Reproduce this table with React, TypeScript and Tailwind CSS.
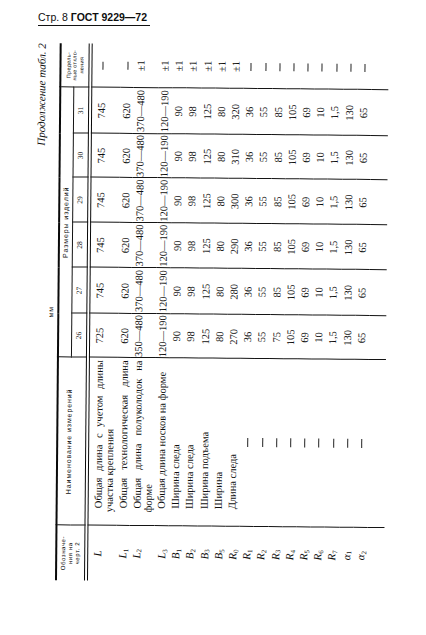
const SIZES = ["26", "27", "28", "29", "30", "31"];

type Row = {
  sym: string;
  sub: string;
  name: string | null;
  vals: string[];
  dev: string;
  tr?: string;
  td?: string;
  last?: boolean;
};

const all = (v: string) => [v, v, v, v, v, v];

const ROWS: Row[] = [
  { sym: "L", sub: "", name: "Общая длина с учетом длины участка крепления", vals: ["725", "745", "745", "745", "745", "745"], dev: "—", tr: "h-[30px]", td: "pt-[4px] leading-[11px]" },
  { sym: "L", sub: "1", name: "Общая технологическая длина", vals: all("620"), dev: "—", tr: "h-[13px]", td: "leading-[13px]", last: true },
  { sym: "L", sub: "2", name: "Общая длина полуколодок на форме", vals: ["350—480", "370—480", "370—480", "370—480", "370—480", "370—480"], dev: "±1", tr: "h-[25px]", td: "pt-[1.5px] leading-[11px]" },
  { sym: "L", sub: "3", name: "Общая длина носков на форме", vals: all("120—190"), dev: "±1" },
  { sym: "B", sub: "1", name: "Ширина следа", vals: all("90"), dev: "±1" },
  { sym: "B", sub: "2", name: "Ширина следа", vals: all("98"), dev: "±1" },
  { sym: "B", sub: "3", name: "Ширина подъема", vals: all("125"), dev: "±1" },
  { sym: "B", sub: "5", name: "Ширина", vals: all("80"), dev: "±1" },
  { sym: "R", sub: "0", name: "Длина следа", vals: ["270", "280", "290", "300", "310", "320"], dev: "±1" },
  { sym: "R", sub: "1", name: null, vals: all("36"), dev: "—" },
  { sym: "R", sub: "2", name: null, vals: all("55"), dev: "—" },
  { sym: "R", sub: "3", name: null, vals: ["75", "85", "85", "85", "85", "85"], dev: "—" },
  { sym: "R", sub: "4", name: null, vals: all("105"), dev: "—" },
  { sym: "R", sub: "5", name: null, vals: all("69"), dev: "—" },
  { sym: "R", sub: "6", name: null, vals: all("10"), dev: "—" },
  { sym: "R", sub: "7", name: null, vals: all("1,5"), dev: "—" },
  { sym: "α", sub: "1", name: null, vals: all("130"), dev: "—" },
  { sym: "α", sub: "2", name: null, vals: all("65"), dev: "—" },
];

const line = "border-[#141414]";

const Dash = ({ w }: { w: string }) => <span className={`inline-block ${w} h-px bg-[#222] align-middle`} />;

export default function App() {
  return (
    <div className="w-[426px] h-[635px] overflow-hidden bg-white text-[#0f0f0f]">
      <div className="pl-[38px] pt-[12px]">
        <div className="w-[112px] border-b border-[#111] pb-[3px] text-[10.5px] leading-[10px] font-['Liberation_Sans',sans-serif]">
          Стр. 8 <b>ГОСТ 9229—72</b>
        </div>
      </div>

      {/* table is printed sideways, reads bottom to top */}
      <div className="ml-[27px] mt-[17px] w-[358px] h-[537px]">
        <div className="w-[537px] h-[358px] origin-top-left -rotate-[89.5deg] translate-y-[537px] font-['Liberation_Serif',serif]">
          <div className="h-[28px] flex flex-col">
            <div className="pt-[4px] text-right text-[11px] leading-[13px] italic">Продолжение табл. 2</div>
            <div className="mt-[1px] text-center text-[7px] leading-[8px] tracking-[1px] font-['Liberation_Sans',sans-serif]">мм</div>
          </div>

          <table className="w-[537px] table-fixed border-collapse">
            <colgroup>
              <col className="w-[55px]" />
              <col className="w-[168px]" />
              <col className="w-[44px]" />
              <col className="w-[46px]" />
              <col className="w-[45px]" />
              <col className="w-[45px]" />
              <col className="w-[44px]" />
              <col className="w-[46px]" />
              <col className="w-[44px]" />
            </colgroup>
            <thead className="font-['Liberation_Sans',sans-serif]">
              <tr className="h-[13px] border-t-2 border-[#0a0a0a]">
                <th rowSpan={2} className={`border-r ${line} align-middle text-[6px] leading-[7px] tracking-[0.6px] font-normal`}>
                  Обозначе-<br />ния на<br />черт. 2
                </th>
                <th rowSpan={2} className={`border-r ${line} align-middle pb-[5px] text-[7px] leading-[8px] tracking-[0.9px] font-normal`}>
                  Наименование измерений
                </th>
                <th colSpan={6} className={`border-r border-b ${line} text-[7px] leading-[12px] tracking-[0.9px] font-normal`}>
                  Размеры изделий
                </th>
                <th rowSpan={2} className="align-middle text-[5.5px] leading-[6.5px] tracking-[0.3px] font-normal">
                  Предель-<br />ные откло-<br />нения
                </th>
              </tr>
              <tr className="h-[14px]">
                {SIZES.map((s) => (
                  <th key={s} className={`border-r ${line} text-[7.5px] leading-[14px] font-normal font-['Liberation_Serif',serif]`}>
                    {s}
                  </th>
                ))}
              </tr>
            </thead>
            <tbody className="text-[10.5px]">
              {ROWS.map((r, i) => {
                const td = r.td || "leading-[14.2px]";
                return (
                  <tr key={i} className={`${r.tr || "h-[14.2px]"} ${i === 0 ? "border-t-4 border-double border-[#0a0a0a]" : ""}`}>
                    <td className={`border-r ${line} align-top p-0 text-center ${td} text-[11px] italic`}>
                      {r.sym}
                      {r.sub && <sub className="not-italic text-[7px]">{r.sub}</sub>}
                    </td>
                    <td className={`border-r ${line} align-top p-0 ${td}`}>
                      {r.name ? (
                        <div className={`pl-[13px] pr-[2px] indent-[4px] text-justify ${r.last ? "[text-align-last:justify]" : ""}`}>{r.name}</div>
                      ) : (
                        <div className="text-center">
                          <Dash w="w-[9px]" />
                        </div>
                      )}
                    </td>
                    {r.vals.map((v, j) => (
                      <td key={j} className={`border-r ${line} align-top p-0 text-center whitespace-nowrap ${td}`}>
                        {v}
                      </td>
                    ))}
                    <td className={`align-top p-0 text-center ${td}`}>
                      {r.dev === "—" ? <Dash w="w-[8px]" /> : r.dev}
                    </td>
                  </tr>
                );
              })}
              <tr className="h-[17px]">
                <td className={`border-r ${line}`} />
                <td className={`border-r ${line}`} />
                {SIZES.map((s) => (
                  <td key={s} className={`border-r ${line}`} />
                ))}
                <td />
              </tr>
            </tbody>
          </table>
        </div>
      </div>
    </div>
  );
}
